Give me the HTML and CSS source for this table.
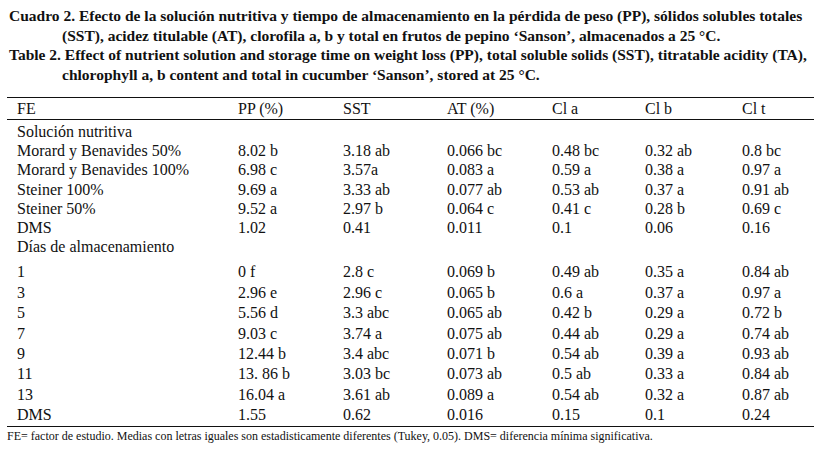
FILE: index.html
```html
<!DOCTYPE html>
<html lang="es">
<head>
<meta charset="utf-8">
<title>Cuadro 2</title>
<link rel="stylesheet" href="styles.css">
</head>
<body>
<div class="caption">
  <p class="cap">Cuadro 2. Efecto de la solución nutritiva y tiempo de almacenamiento en la pérdida de peso (PP), sólidos solubles totales (SST), acidez titulable (AT), clorofila a, b y total en frutos de pepino ‘Sanson’, almacenados a 25 °C.</p>
  <p class="cap">Table 2. Effect of nutrient solution and storage time on weight loss (PP), total soluble solids (SST), titratable acidity (TA), chlorophyll a, b content and total in cucumber ‘Sanson’, stored at 25 °C.</p>
</div>
<table class="data">
  <colgroup>
    <col class="c1"><col class="c2"><col class="c3"><col class="c4"><col class="c5"><col class="c6"><col class="c7">
  </colgroup>
  <thead>
    <tr><th>FE</th><th>PP (%)</th><th>SST</th><th>AT (%)</th><th>Cl a</th><th>Cl b</th><th>Cl t</th></tr>
  </thead>
  <tbody class="g1">
    <tr class="first"><td colspan="7">Solución nutritiva</td></tr>
    <tr><td>Morard y Benavides 50%</td><td>8.02 b</td><td>3.18 ab</td><td>0.066 bc</td><td>0.48 bc</td><td>0.32 ab</td><td>0.8 bc</td></tr>
    <tr><td>Morard y Benavides 100%</td><td>6.98 c</td><td>3.57a</td><td>0.083 a</td><td>0.59 a</td><td>0.38 a</td><td>0.97 a</td></tr>
    <tr><td>Steiner 100%</td><td>9.69 a</td><td>3.33 ab</td><td>0.077 ab</td><td>0.53 ab</td><td>0.37 a</td><td>0.91 ab</td></tr>
    <tr><td>Steiner 50%</td><td>9.52 a</td><td>2.97 b</td><td>0.064 c</td><td>0.41 c</td><td>0.28 b</td><td>0.69 c</td></tr>
    <tr><td>DMS</td><td>1.02</td><td>0.41</td><td>0.011</td><td>0.1</td><td>0.06</td><td>0.16</td></tr>
    <tr><td colspan="7">Días de almacenamiento</td></tr>
  </tbody>
  <tbody class="g2">
    <tr class="first"><td>1</td><td>0 f</td><td>2.8 c</td><td>0.069 b</td><td>0.49 ab</td><td>0.35 a</td><td>0.84 ab</td></tr>
    <tr><td>3</td><td>2.96 e</td><td>2.96 c</td><td>0.065 b</td><td>0.6 a</td><td>0.37 a</td><td>0.97 a</td></tr>
    <tr><td>5</td><td>5.56 d</td><td>3.3 abc</td><td>0.065 ab</td><td>0.42 b</td><td>0.29 a</td><td>0.72 b</td></tr>
    <tr><td>7</td><td>9.03 c</td><td>3.74 a</td><td>0.075 ab</td><td>0.44 ab</td><td>0.29 a</td><td>0.74 ab</td></tr>
    <tr><td>9</td><td>12.44 b</td><td>3.4 abc</td><td>0.071 b</td><td>0.54 ab</td><td>0.39 a</td><td>0.93 ab</td></tr>
    <tr><td>11</td><td>13. 86 b</td><td>3.03 bc</td><td>0.073 ab</td><td>0.5 ab</td><td>0.33 a</td><td>0.84 ab</td></tr>
    <tr><td>13</td><td>16.04 a</td><td>3.61 ab</td><td>0.089 a</td><td>0.54 ab</td><td>0.32 a</td><td>0.87 ab</td></tr>
    <tr class="last"><td>DMS</td><td>1.55</td><td>0.62</td><td>0.016</td><td>0.15</td><td>0.1</td><td>0.24</td></tr>
  </tbody>
</table>
<p class="note">FE= factor de estudio. Medias con letras iguales son estadisticamente diferentes (Tukey, 0.05). DMS= diferencia mínima significativa.</p>
</body>
</html>
```

FILE: styles.css
```css
html, body {
  margin: 0;
  padding: 0;
  background: #ffffff;
}

body {
  padding-top: 6px;
  color: #111111;
  font-family: "Liberation Serif", "Times New Roman", serif;
}

.caption {
  margin-left: 9px;
  width: 813px;
}

.cap {
  margin: 0;
  padding-left: 53px;
  text-indent: -53px;
  font-weight: bold;
  font-size: 15.5px;
  line-height: 19.5px;
}

.data {
  margin: 13px 0 0 7px;
  width: 807px;
  table-layout: fixed;
  border-collapse: collapse;
  font-size: 16px;
}

.c1 { width: 231px; }
.c2 { width: 105px; }
.c3 { width: 104px; }
.c4 { width: 105px; }
.c5 { width: 93px; }
.c6 { width: 97px; }
.c7 { width: 72px; }

.data th,
.data td {
  padding: 0;
  text-align: left;
  white-space: nowrap;
  vertical-align: middle;
}

.data th:first-child,
.data td:first-child {
  padding-left: 10px;
}

.data thead th {
  font-weight: normal;
  line-height: 19px;
  padding-top: 1px;
  padding-bottom: 1px;
  border-top: 1px solid #111111;
  border-bottom: 1px solid #111111;
}

.g1 td {
  line-height: 19.2px;
}

.g1 .first td {
  padding-top: 2px;
}

.g2 td {
  line-height: 20.4px;
}

.g2 .first td {
  padding-top: 6px;
}

.g2 .last td {
  border-bottom: 1px solid #111111;
}

.note {
  margin: 2px 0 0 7px;
  font-size: 12px;
  line-height: 14px;
}
```
